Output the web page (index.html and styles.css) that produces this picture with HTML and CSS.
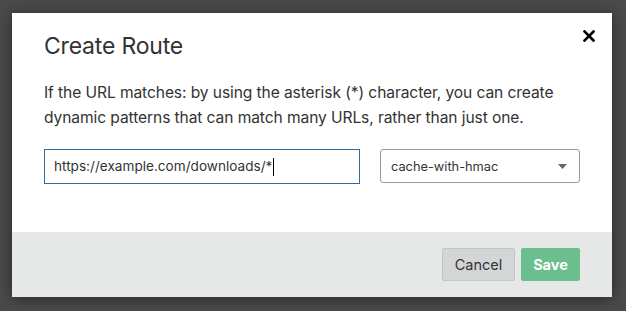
FILE: index.html
```html
<!DOCTYPE html>
<html lang="en">
<head>
  <meta charset="UTF-8" />
  <title>Create Route</title>
  <link rel="stylesheet" href="styles.css">
</head>
<body>
  <div class="modal">
    <div class="modal-body">
      <div class="modal-header">
        <h2>Create Route</h2>
        <button class="close" aria-label="Close">
          <svg width="12" height="12" viewBox="0 0 12 12">
            <path d="M1.5 1.5 L10.5 10.5 M10.5 1.5 L1.5 10.5" stroke="#000" stroke-width="2.6" stroke-linecap="square"/>
          </svg>
        </button>
      </div>

      <p class="hint">If the URL matches: by using the asterisk (*) character, you can create dynamic patterns that can match many URLs, rather than just one.</p>

      <div class="fields">
        <div class="url-input">https://example.com/downloads/*<span class="caret"></span></div>
        <div class="select">
          <span>cache-with-hmac</span>
          <svg width="9" height="5" viewBox="0 0 9 5"><path d="M0 0 H9 L4.5 5 Z" fill="#666"/></svg>
        </div>
      </div>
    </div>

    <div class="modal-footer">
      <button class="btn btn-cancel">Cancel</button>
      <button class="btn btn-save">Save</button>
    </div>
  </div>
</body>
</html>
```

FILE: styles.css
```css
body {
  margin: 0;
  background-color: #4a4a4a;
  font-family: Inter, "Noto Sans", sans-serif;
  color: #333;
  height: 311px;
  padding-top: 13px;
  box-sizing: border-box;
}

.modal {
  width: 600px;
  margin-left: 12px;
  background: #fff;
  box-shadow: 0 2px 14px rgba(0, 0, 0, 0.45);
}

.modal-body {
  padding: 19px 32px 48px 32px;
}

.modal-header {
  display: flex;
  justify-content: space-between;
  align-items: flex-start;
}

h2 {
  margin: 0;
  font-size: 23px;
  font-weight: 400;
  line-height: 28px;
  color: #333;
  letter-spacing: -0.2px;
}

.close {
  background: none;
  border: none;
  padding: 0;
  margin: -2px -15px 0 0;
  line-height: 0;
  cursor: pointer;
}

.hint {
  margin: 20px 0 0 0;
  font-size: 15.6px;
  line-height: 25px;
  color: #333;
  letter-spacing: -0.1px;
}

.fields {
  display: flex;
  gap: 20px;
  margin-top: 19px;
}

.url-input {
  width: 316px;
  height: 35px;
  box-sizing: border-box;
  border: 1px solid #2d6ca2;
  padding: 0 9px;
  font-size: 13.6px;
  line-height: 33px;
  color: #333;
  display: flex;
  align-items: center;
}

.caret {
  display: inline-block;
  width: 1px;
  height: 18px;
  background: #000;
  margin-left: 1px;
}

.select {
  flex: 1;
  height: 34px;
  box-sizing: border-box;
  border: 1px solid #999;
  border-radius: 3px;
  padding: 0 12px 0 10px;
  font-size: 12.8px;
  color: #333;
  display: flex;
  align-items: center;
  justify-content: space-between;
}

.modal-footer {
  background: #e6e7e7;
  height: 65px;
  display: flex;
  justify-content: flex-end;
  align-items: center;
  gap: 6px;
  padding: 0 32px;
}

.btn {
  height: 33px;
  border-radius: 2px;
  font-family: Inter, "Noto Sans", sans-serif;
  font-size: 14.5px;
  cursor: pointer;
}

.btn-cancel {
  width: 73px;
  background: #d4d5d7;
  border: 1px solid #c4c5c7;
  color: #333;
}

.btn-save {
  width: 59px;
  background: #6bbe8d;
  border: 1px solid #6bbe8d;
  color: #fff;
  font-weight: 700;
}
```
